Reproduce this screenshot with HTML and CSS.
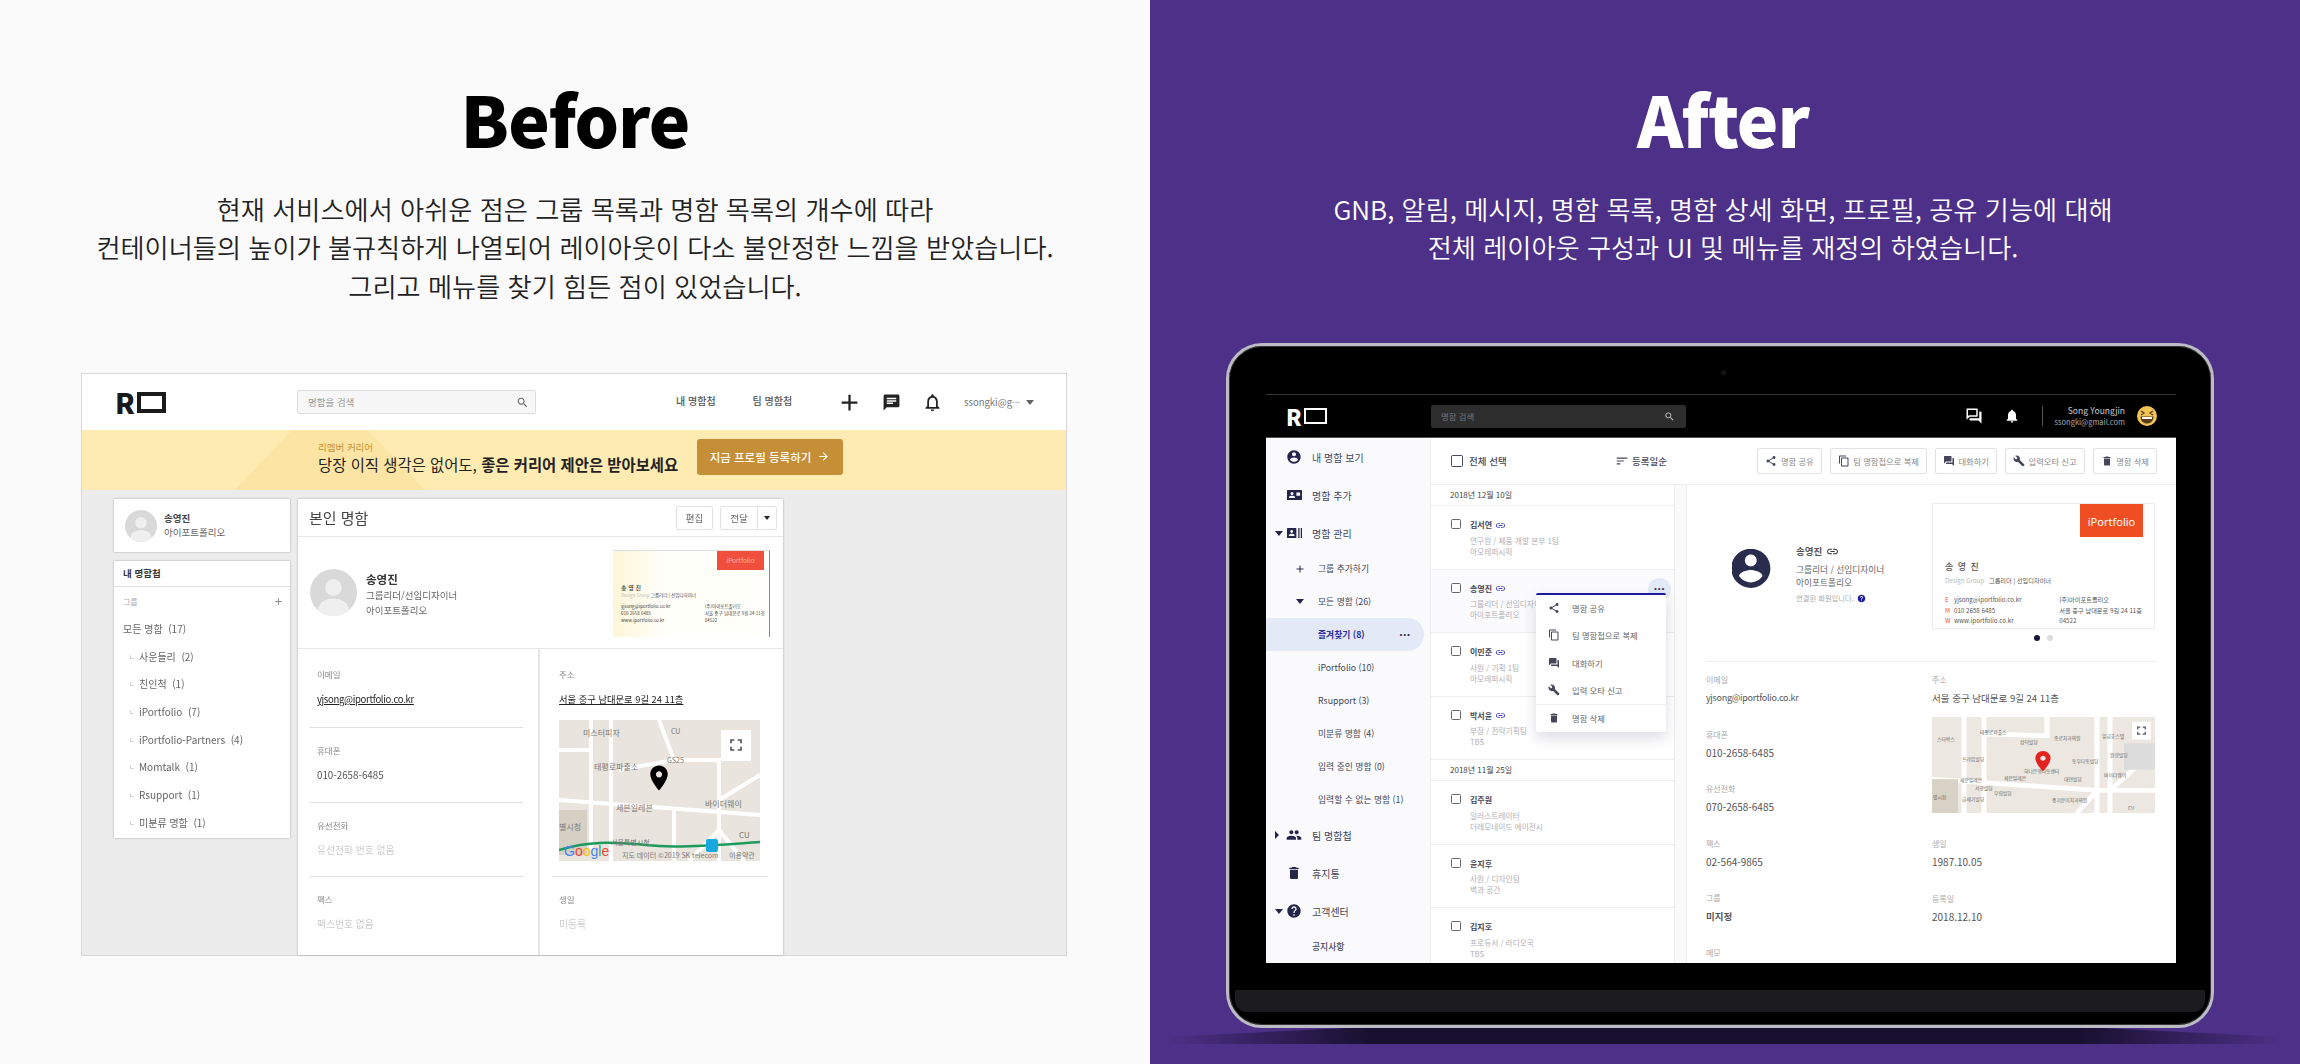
FILE: index.html
```html
<!DOCTYPE html>
<html lang="ko">
<head>
<meta charset="utf-8">
<title>Before / After</title>
<link rel="stylesheet" href="styles.css">
</head>
<body>
<svg class="sprite" aria-hidden="true">
  <symbol id="i-account" viewBox="0 0 24 24"><path d="M12 2C6.48 2 2 6.48 2 12s4.48 10 10 10 10-4.48 10-10S17.52 2 12 2zm0 3c1.66 0 3 1.34 3 3s-1.34 3-3 3-3-1.34-3-3 1.34-3 3-3zm0 14.2c-2.5 0-4.71-1.28-6-3.22.03-1.99 4-3.08 6-3.08 1.99 0 5.97 1.09 6 3.08-1.29 1.94-3.5 3.22-6 3.22z"/></symbol>
  <symbol id="i-chat" viewBox="0 0 24 24"><path d="M20 2H4c-1.1 0-2 .9-2 2v18l4-4h14c1.1 0 2-.9 2-2V4c0-1.1-.9-2-2-2zM6 9h12v2H6zm8 5H6v-2h8zm4-6H6V6h12z"/></symbol>
  <symbol id="i-forum" viewBox="0 0 24 24"><path d="M21 6h-2v9H6v2c0 .55.45 1 1 1h11l4 4V7c0-.55-.45-1-1-1zm-4 6V3c0-.55-.45-1-1-1H3c-.55 0-1 .45-1 1v14l4-4h10c.55 0 1-.45 1-1z"/></symbol>
  <symbol id="i-forum-o" viewBox="0 0 24 24"><path d="M21 6h-2v9H6v2c0 .55.45 1 1 1h11l4 4V7c0-.55-.45-1-1-1zM15 4v7H5.2L4 12.2V4h11zm1-2H3c-.55 0-1 .45-1 1v14l4-4h10c.55 0 1-.45 1-1V3c0-.55-.45-1-1-1z"/></symbol>
  <symbol id="i-bell" viewBox="0 0 24 24"><path d="M12 22c1.1 0 2-.9 2-2h-4c0 1.1.89 2 2 2zm6-6v-5c0-3.07-1.64-5.64-4.5-6.32V4c0-.83-.67-1.5-1.5-1.5s-1.5.67-1.5 1.5v.68C7.63 5.36 6 7.92 6 11v5l-2 2v1h16v-1l-2-2z"/></symbol>
  <symbol id="i-bell-o" viewBox="0 0 24 24"><path d="M12 22c1.1 0 2-.9 2-2h-4c0 1.1.9 2 2 2zm6-6v-5c0-3.07-1.63-5.64-4.5-6.32V4c0-.83-.67-1.5-1.5-1.5s-1.5.67-1.5 1.5v.68C7.64 5.36 6 7.92 6 11v5l-2 2v1h16v-1l-2-2zm-2 1H8v-6c0-2.48 1.51-4.5 4-4.5s4 2.02 4 4.5v6z"/></symbol>
  <symbol id="i-search" viewBox="0 0 24 24"><path d="M15.5 14h-.79l-.28-.27C15.41 12.59 16 11.11 16 9.5 16 5.91 13.09 3 9.5 3S3 5.91 3 9.5 5.91 16 9.5 16c1.61 0 3.09-.59 4.23-1.57l.27.28v.79l5 4.99L20.49 19l-4.99-5zm-6 0C7.01 14 5 11.99 5 9.5S7.01 5 9.5 5 14 7.01 14 9.5 11.99 14 9.5 14z"/></symbol>
  <symbol id="i-share" viewBox="0 0 24 24"><path d="M18 16.08c-.76 0-1.44.3-1.96.77L8.91 12.7c.05-.23.09-.46.09-.7s-.04-.47-.09-.7l7.05-4.11c.54.5 1.25.81 2.04.81 1.66 0 3-1.34 3-3s-1.34-3-3-3-3 1.34-3 3c0 .24.04.47.09.7L8.04 9.81C7.5 9.31 6.79 9 6 9c-1.66 0-3 1.34-3 3s1.34 3 3 3c.79 0 1.5-.31 2.04-.81l7.12 4.16c-.05.21-.08.43-.08.65 0 1.61 1.31 2.92 2.92 2.92 1.61 0 2.92-1.31 2.92-2.92s-1.31-2.92-2.92-2.92z"/></symbol>
  <symbol id="i-copy" viewBox="0 0 24 24"><path d="M16 1H4c-1.1 0-2 .9-2 2v14h2V3h12V1zm3 4H8c-1.1 0-2 .9-2 2v14c0 1.1.9 2 2 2h11c1.1 0 2-.9 2-2V7c0-1.1-.9-2-2-2zm0 16H8V7h11v14z"/></symbol>
  <symbol id="i-wrench" viewBox="0 0 24 24"><path d="M22.7 19l-9.1-9.1c.9-2.3.4-5-1.5-6.9-2-2-5-2.4-7.4-1.3L9 6 6 9 1.6 4.7C.4 7.1.9 10.1 2.9 12.1c1.9 1.9 4.6 2.4 6.9 1.5l9.1 9.1c.4.4 1 .4 1.4 0l2.3-2.3c.5-.4.5-1.1.1-1.4z"/></symbol>
  <symbol id="i-trash" viewBox="0 0 24 24"><path d="M6 19c0 1.1.9 2 2 2h8c1.1 0 2-.9 2-2V7H6v12zM19 4h-3.5l-1-1h-5l-1 1H5v2h14V4z"/></symbol>
  <symbol id="i-link" viewBox="0 0 24 24"><path d="M3.9 12c0-1.71 1.39-3.1 3.1-3.1h4V7H7c-2.76 0-5 2.24-5 5s2.24 5 5 5h4v-1.9H7c-1.71 0-3.1-1.39-3.1-3.1zM8 13h8v-2H8v2zm9-6h-4v1.9h4c1.71 0 3.1 1.39 3.1 3.1s-1.39 3.1-3.1 3.1h-4V17h4c2.76 0 5-2.24 5-5s-2.24-5-5-5z"/></symbol>
  <symbol id="i-help" viewBox="0 0 24 24"><path d="M12 2C6.48 2 2 6.48 2 12s4.48 10 10 10 10-4.48 10-10S17.52 2 12 2zm1 17h-2v-2h2v2zm2.07-7.75l-.9.92C13.45 12.9 13 13.5 13 15h-2v-.5c0-1.1.45-2.1 1.17-2.83l1.24-1.26c.37-.36.59-.86.59-1.41 0-1.1-.9-2-2-2s-2 .9-2 2H8c0-2.21 1.79-4 4-4s4 1.79 4 4c0 .88-.36 1.68-.93 2.25z"/></symbol>
  <symbol id="i-people" viewBox="0 0 24 24"><path d="M16 11c1.66 0 2.99-1.34 2.99-3S17.66 5 16 5c-1.66 0-3 1.34-3 3s1.34 3 3 3zm-8 0c1.66 0 2.99-1.34 2.99-3S9.66 5 8 5C6.34 5 5 6.34 5 8s1.34 3 3 3zm0 2c-2.33 0-7 1.17-7 3.5V19h14v-2.5c0-2.33-4.67-3.5-7-3.5zm8 0c-.29 0-.62.02-.97.05 1.16.84 1.97 1.97 1.97 3.45V19h6v-2.5c0-2.33-4.67-3.5-7-3.5z"/></symbol>
  <symbol id="i-full" viewBox="0 0 24 24"><path d="M7 14H5v5h5v-2H7v-3zm-2-4h2V7h3V5H5v5zm12 7h-3v2h5v-5h-2v3zM14 5v2h3v3h2V5h-5z"/></symbol>
  <symbol id="i-place" viewBox="0 0 24 24"><path d="M12 2C8.13 2 5 5.13 5 9c0 5.25 7 13 7 13s7-7.75 7-13c0-3.87-3.13-7-7-7zm0 9.5c-1.38 0-2.5-1.12-2.5-2.5s1.12-2.5 2.5-2.5 2.5 1.12 2.5 2.5-1.12 2.5-2.5 2.5z"/></symbol>
  <symbol id="i-sort" viewBox="0 0 24 24"><path d="M3 18h6v-2H3v2zM3 6v2h18V6H3zm0 7h12v-2H3v2z"/></symbol>
  <symbol id="i-plus" viewBox="0 0 24 24"><path d="M19 13h-6v6h-2v-6H5v-2h6V5h2v6h6v2z"/></symbol>
  <symbol id="i-arrow" viewBox="0 0 24 24"><path d="M12 4l-1.41 1.41L16.17 11H4v2h12.17l-5.58 5.59L12 20l8-8z"/></symbol>
  <symbol id="i-card" viewBox="0 0 24 16"><path d="M1 0h22a1 1 0 0 1 1 1v14a1 1 0 0 1-1 1H1a1 1 0 0 1-1-1V1a1 1 0 0 1 1-1zm7 3.2a2.4 2.4 0 1 0 0 4.8 2.4 2.4 0 0 0 0-4.8zM3 12.8h10v-1.2c0-1.7-3.3-2.4-5-2.4s-5 .7-5 2.4zM15 4v5h6V4z"/></symbol>
  <symbol id="i-contacts" viewBox="0 0 24 16"><path d="M1 0h13a1 1 0 0 1 1 1v14a1 1 0 0 1-1 1H1a1 1 0 0 1-1-1V1a1 1 0 0 1 1-1zm6.500 3.200a2.300 2.300 0 1 0 0 4.600 2.300 2.300 0 0 0 0-4.600zM3 12.800h9v-1.300c0-1.600-3-2.300-4.500-2.300S3 9.900 3 11.500zM18 0h2v16h-2zM22 0h2v16h-2z"/></symbol>
  <symbol id="i-person" viewBox="0 0 48 48"><circle cx="24" cy="24" r="24" fill="#d9d9d9"/><circle cx="24" cy="19" r="8.500" fill="#efefef"/><path d="M8 42c1-9 9-12 16-12s15 3 16 12a24 24 0 0 1-32 0z" fill="#efefef"/></symbol>
</svg>

<main class="page">
  <section class="pane pane-before">
    <header class="intro">
      <h1 class="title">Before</h1>
      <p class="desc">현재 서비스에서 아쉬운 점은 그룹 목록과 명함 목록의 개수에 따라<br>컨테이너들의 높이가 불규칙하게 나열되어 레이아웃이 다소 불안정한 느낌을 받았습니다.<br>그리고 메뉴를 찾기 힘든 점이 있었습니다.</p>
    </header>

    <div class="old">
      <div class="old-top">
        <div class="logo logo-dark"><span class="logo-r">R</span><span class="logo-box"></span></div>
        <div class="old-search"><span>명함을 검색</span><svg class="ic ic-13"><use href="#i-search"/></svg></div>
        <nav class="old-nav"><span>내 명함첩</span><span>팀 명함첩</span></nav>
        <div class="old-icons">
          <svg class="ic ic-24"><use href="#i-plus"/></svg>
          <svg class="ic ic-19"><use href="#i-chat"/></svg>
          <svg class="ic ic-21"><use href="#i-bell-o"/></svg>
        </div>
        <div class="old-user"><span>ssongki@g···</span><i class="caret caret-gray"></i></div>
      </div>
      <div class="old-banner">
        <div class="banner-shape"></div>
        <div class="banner-text">
          <span class="banner-small">리멤버 커리어</span>
          <span class="banner-main">당장 이직 생각은 없어도, <b>좋은 커리어 제안은 받아보세요</b></span>
        </div>
        <div class="banner-btn">지금 프로필 등록하기 <svg class="ic ic-13"><use href="#i-arrow"/></svg></div>
      </div>
      <div class="old-body">
        <aside class="old-side">
          <div class="side-me">
            <svg class="ic-avatar-s"><use href="#i-person"/></svg>
            <div class="side-me-text"><b>송영진</b><span>아이포트폴리오</span></div>
          </div>
          <div class="side-groups">
            <div class="sg-head">내 명함첩</div>
            <div class="sg-label"><span>그룹</span><svg class="ic ic-11"><use href="#i-plus"/></svg></div>
            <div class="sg-all">모든 명함 &nbsp;(17)</div>
            <div class="sg-row"><i>ㄴ</i>사운들리 &nbsp;(2)</div>
            <div class="sg-row"><i>ㄴ</i>친인척 &nbsp;(1)</div>
            <div class="sg-row"><i>ㄴ</i>iPortfolio &nbsp;(7)</div>
            <div class="sg-row"><i>ㄴ</i>iPortfolio-Partners &nbsp;(4)</div>
            <div class="sg-row"><i>ㄴ</i>Momtalk &nbsp;(1)</div>
            <div class="sg-row"><i>ㄴ</i>Rsupport &nbsp;(1)</div>
            <div class="sg-row"><i>ㄴ</i>미분류 명함 &nbsp;(1)</div>
          </div>
        </aside>
        <article class="old-main">
          <div class="om-head">
            <h2>본인 명함</h2>
            <div class="om-btns">
              <span class="om-btn">편집</span>
              <span class="om-btn om-split"><em>전달</em><i class="caret"></i></span>
            </div>
          </div>
          <div class="om-profile">
            <svg class="ic-avatar-m"><use href="#i-person"/></svg>
            <div class="om-who"><b>송영진</b><span>그룹리더/선임디자이너</span><span>아이포트폴리오</span></div>
            <div class="om-card">
              <div class="om-card-tag">iPortfolio</div>
              <div class="om-card-name">송 영 진</div>
              <div class="om-card-role"><span>Design Group</span> 그룹리더 | 선임디자이너</div>
              <div class="om-card-info">
                <div><span>yjsong@iportfolio.co.kr</span><span>010 2658 6485</span><span>www.iportfolio.co.kr</span></div>
                <div><span>(주)아이포트폴리오</span><span>서울 중구 남대문로 9길 24 11층</span><span>04522</span></div>
              </div>
            </div>
          </div>
          <div class="om-cols">
            <div class="om-col om-col-l">
              <div class="of of-first"><label>이메일</label><a class="mail">yjsong@iportfolio.co.kr</a></div>
              <div class="of"><label>휴대폰</label><span>010-2658-6485</span></div>
              <div class="of"><label>유선전화</label><span class="none">유선전화 번호 없음</span></div>
              <div class="of of-last"><label>팩스</label><span class="none">팩스번호 없음</span></div>
            </div>
            <div class="om-col om-col-r">
              <div class="of of-map"><label>주소</label><a>서울 중구 남대문로 9길 24 11층</a>
                <svg class="old-map" viewBox="0 0 201 141">
                  <rect width="201" height="141" fill="#e9e5de"/>
                  <g stroke="#fff" stroke-width="4" fill="none">
                    <path d="M32 0V130M52 0V141M0 80L201 95M100 0L115 40H160V141M0 30H32M115 40L60 50M160 80L201 55M160 110L130 141M160 110L185 141M115 90V141"/>
                  </g>
                  <rect x="0" y="90" width="28" height="45" fill="#d6d0c4"/>
                  <path d="M0 130C40 118 70 124 100 126S170 124 201 122" stroke="#1c9c5c" stroke-width="2.500" fill="none"/>
                  <g class="map-t">
                    <text x="24" y="16" fill="#a5725a">미스터피자</text>
                    <text x="35" y="50">태평로파출소</text>
                    <text x="108" y="43" class="map-s">GS25</text>
                    <text x="112" y="14" class="map-s">CU</text>
                    <text x="57" y="91">세븐일레븐</text>
                    <text x="146" y="87">바이더웨이</text>
                    <text x="0" y="110">별시청</text>
                    <text x="180" y="118">CU</text>
                    <text x="52" y="125" class="map-s">서울특별시청</text>
                    <text x="63" y="138" class="map-s">지도 데이터 ©2019 SK telecom</text>
                    <text x="170" y="138" class="map-s">이용약관</text>
                  </g>
                  <text x="5" y="136" class="g-logo"><tspan fill="#4285f4">G</tspan><tspan fill="#ea4335">o</tspan><tspan fill="#fbbc05">o</tspan><tspan fill="#4285f4">g</tspan><tspan fill="#34a853">l</tspan><tspan fill="#ea4335">e</tspan></text>
                  <rect x="147" y="119" width="12" height="13" rx="2" fill="#18a8e0"/>
                  <rect x="162" y="10" width="30" height="31" fill="#fff"/>
                  <use href="#i-full" x="167" y="15" width="20" height="20" fill="#555"/>
                  <use href="#i-place" x="85" y="43" width="30" height="30" fill="#000"/>
                </svg>
              </div>
              <div class="of of-last"><label>생일</label><span class="none">미등록</span></div>
            </div>
          </div>
        </article>
      </div>
    </div>
  </section>

  <section class="pane pane-after">
    <header class="intro intro-after">
      <h1 class="title">After</h1>
      <p class="desc">GNB, 알림, 메시지, 명함 목록, 명함 상세 화면, 프로필, 공유 기능에 대해<br>전체 레이아웃 구성과 UI 및 메뉴를 재정의 하였습니다.</p>
    </header>

    <div class="laptop">
      <span class="camera"></span>
      <div class="screen">
        <div class="app-top">
          <div class="logo logo-light"><span class="logo-r">R</span><span class="logo-box"></span></div>
          <div class="app-search"><span>명함 검색</span><svg class="ic ic-11"><use href="#i-search"/></svg></div>
          <div class="app-right">
            <svg class="ic ic-18"><use href="#i-forum-o"/></svg>
            <svg class="ic ic-16"><use href="#i-bell"/></svg>
            <i class="app-sep"></i>
            <div class="app-user"><span>Song Youngjin</span><span>ssongki@gmail.com</span></div>
            <svg class="emoji" viewBox="0 0 20 20"><circle cx="10" cy="10" r="10" fill="#f1c453"/><path d="M3.500 10.500h13C16.500 15 13.500 17.500 10 17.500S3.500 15 3.500 10.500z" fill="#5a3d1e"/><path d="M5 11h10v2H5z" fill="#fff"/><path d="M4 5l3 2-3 2M16 5l-3 2 3 2" stroke="#5a3d1e" stroke-width="1.300" fill="none"/></svg>
          </div>
        </div>
        <div class="app-body">
          <nav class="app-side">
            <div class="nav-main"><i class="nav-arrow"></i><svg class="ic nav-ic"><use href="#i-account"/></svg><span>내 명함 보기</span></div>
            <div class="nav-main"><i class="nav-arrow"></i><svg class="nav-ic nav-ic-wide"><use href="#i-card"/></svg><span>명함 추가</span></div>
            <div class="nav-main"><i class="nav-arrow"><b class="caret caret-navy"></b></i><svg class="nav-ic nav-ic-wide"><use href="#i-contacts"/></svg><span>명함 관리</span></div>
            <div class="nav-sub"><svg class="ic nav-sub-ic"><use href="#i-plus"/></svg><span>그룹 추가하기</span></div>
            <div class="nav-sub"><i class="nav-sub-ic nav-sub-c"><b class="caret caret-navy"></b></i><span>모든 명함 (26)</span></div>
            <div class="nav-sub nav-active"><i class="nav-sub-ic"></i><span>즐겨찾기 (8)</span><em class="dots">•••</em></div>
            <div class="nav-sub"><i class="nav-sub-ic"></i><span>iPortfolio (10)</span></div>
            <div class="nav-sub"><i class="nav-sub-ic"></i><span>Rsupport (3)</span></div>
            <div class="nav-sub"><i class="nav-sub-ic"></i><span>미분류 명함 (4)</span></div>
            <div class="nav-sub"><i class="nav-sub-ic"></i><span>입력 중인 명함 (0)</span></div>
            <div class="nav-sub"><i class="nav-sub-ic"></i><span>입력할 수 없는 명함 (1)</span></div>
            <div class="nav-main"><i class="nav-arrow"><b class="caret-r"></b></i><svg class="ic nav-ic"><use href="#i-people"/></svg><span>팀 명함첩</span></div>
            <div class="nav-main"><i class="nav-arrow"></i><svg class="ic nav-ic"><use href="#i-trash"/></svg><span>휴지통</span></div>
            <div class="nav-main"><i class="nav-arrow"><b class="caret caret-navy"></b></i><svg class="ic nav-ic"><use href="#i-help"/></svg><span>고객센터</span></div>
            <div class="nav-sub nav-notice"><span>공지사항</span></div>
          </nav>
          <div class="app-list">
            <div class="list-head">
              <i class="check check-lg"></i><b>전체 선택</b>
              <div class="list-sort"><svg class="ic ic-14"><use href="#i-sort"/></svg><b>등록일순</b></div>
            </div>
            <div class="list-scroll">
              <div class="list-col">
                <div class="list-date">2018년 12월 10일</div>
                <div class="item"><i class="check"></i><div><div class="item-name">김서연 <svg class="ic ic-link"><use href="#i-link"/></svg></div><p>연구원 / 제품 개발 본부 1팀</p><p>아모레퍼시픽</p></div></div>
                <div class="item item-on"><i class="check"></i><div><div class="item-name">송영진 <svg class="ic ic-link"><use href="#i-link"/></svg></div><p>그룹리더 / 선임디자이너</p><p>아이포트폴리오</p></div>
                  <span class="item-more">•••</span>
                  <div class="menu">
                    <div class="menu-row"><svg class="ic ic-12"><use href="#i-share"/></svg>명함 공유</div>
                    <div class="menu-row"><svg class="ic ic-12"><use href="#i-copy"/></svg>팀 명함첩으로 복제</div>
                    <div class="menu-row"><svg class="ic ic-12"><use href="#i-forum"/></svg>대화하기</div>
                    <div class="menu-row"><svg class="ic ic-12"><use href="#i-wrench"/></svg>입력 오타 신고</div>
                    <div class="menu-row menu-last"><svg class="ic ic-12"><use href="#i-trash"/></svg>명함 삭제</div>
                  </div>
                </div>
                <div class="item"><i class="check"></i><div><div class="item-name">이민준 <svg class="ic ic-link"><use href="#i-link"/></svg></div><p>사원 / 기획 1팀</p><p>아모레퍼시픽</p></div></div>
                <div class="item"><i class="check"></i><div><div class="item-name">박서윤 <svg class="ic ic-link"><use href="#i-link"/></svg></div><p>부장 / 전략기획팀</p><p>TBS</p></div></div>
                <div class="list-date">2018년 11월 25일</div>
                <div class="item"><i class="check"></i><div><div class="item-name">김주원</div><p>일러스트레이터</p><p>더레모네이드 에이전시</p></div></div>
                <div class="item"><i class="check"></i><div><div class="item-name">윤지후</div><p>사원 / 디자인팀</p><p>벽과 공간</p></div></div>
                <div class="item"><i class="check"></i><div><div class="item-name">김지호</div><p>프로듀서 / 라디오국</p><p>TBS</p></div></div>
              </div>
            </div>
          </div>
          <div class="app-detail">
            <div class="det-head">
              <span class="det-btn"><svg class="ic ic-12"><use href="#i-share"/></svg>명함 공유</span>
              <span class="det-btn"><svg class="ic ic-12"><use href="#i-copy"/></svg>팀 명함첩으로 복제</span>
              <span class="det-btn"><svg class="ic ic-12"><use href="#i-forum"/></svg>대화하기</span>
              <span class="det-btn"><svg class="ic ic-12"><use href="#i-wrench"/></svg>입력오타 신고</span>
              <span class="det-btn"><svg class="ic ic-12"><use href="#i-trash"/></svg>명함 삭제</span>
            </div>
            <div class="det-top">
              <div class="det-who">
                <svg class="ic det-avatar" viewBox="2 2 20 20"><use href="#i-account"/></svg>
                <div class="det-text">
                  <b>송영진 <svg class="ic ic-link-d"><use href="#i-link"/></svg></b>
                  <span>그룹리더 / 선임디자이너</span>
                  <span>아이포트폴리오</span>
                  <small>연결된 회원입니다. <svg class="ic ic-help"><use href="#i-help"/></svg></small>
                </div>
              </div>
              <div class="det-cardwrap">
                <div class="bcard">
                  <div class="bcard-tag">iPortfolio</div>
                  <div class="bcard-name">송 영 진</div>
                  <div class="bcard-role"><span>Design Group</span> 그룹리더 | 선임디자이너</div>
                  <div class="bcard-info">
                    <div><span><i>E</i>yjsong@iportfolio.co.kr</span><span><i>M</i>010 2658 6485</span><span><i>W</i>www.iportfolio.co.kr</span></div>
                    <div><span>(주)아이포트폴리오</span><span>서울 중구 남대문로 9길 24 11층</span><span>04522</span></div>
                  </div>
                </div>
                <div class="bcard-dots"><i class="on"></i><i></i></div>
              </div>
            </div>
            <div class="det-info">
              <div class="det-col">
                <div class="df"><label>이메일</label><span class="mail">yjsong@iportfolio.co.kr</span></div>
                <div class="df"><label>휴대폰</label><span>010-2658-6485</span></div>
                <div class="df"><label>유선전화</label><span>070-2658-6485</span></div>
                <div class="df"><label>팩스</label><span>02-564-9865</span></div>
                <div class="df"><label>그룹</label><span><b>미지정</b></span></div>
                <div class="df"><label>메모</label></div>
              </div>
              <div class="det-col">
                <div class="df df-map"><label>주소</label><span class="addr">서울 중구 남대문로 9길 24 11층</span>
                  <svg class="new-map" viewBox="0 0 223 102" preserveAspectRatio="none">
                    <rect width="223" height="102" fill="#ece7e0"/>
                    <g stroke="#fff" stroke-width="5" fill="none">
                      <path d="M32 0V102M52 0V102M0 66L165 78H223M165 0V102M115 0L115 20 52 18M165 78L145 102M178 78L223 35M178 0V102"/>
                    </g>
                    <rect x="0" y="66" width="26" height="36" fill="#d8d2c6"/>
                    <rect x="192" y="28" width="31" height="28" fill="#dcdcdc"/>
                    <g class="map-n">
                      <text x="5" y="26" fill="#b5651d">스타벅스</text>
                      <text x="30" y="47">프라임빌딩</text>
                      <text x="48" y="18">태평로파출소</text>
                      <text x="88" y="29">삼덕빌딩</text>
                      <text x="122" y="24" fill="#a33">종로치과의원</text>
                      <text x="140" y="49">동부다동빌딩</text>
                      <text x="92" y="59">하나은행다동센터</text>
                      <text x="28" y="69">세븐일레븐</text>
                      <text x="72" y="67">세븐일레븐</text>
                      <text x="132" y="68">대연빌딩</text>
                      <text x="43" y="78">서광빌딩</text>
                      <text x="62" y="83">부림빌딩</text>
                      <text x="30" y="89">금세기빌딩</text>
                      <text x="120" y="90" fill="#a33">중기분이치과의원</text>
                      <text x="170" y="22">일급호스텔</text>
                      <text x="178" y="42">원양빌딩</text>
                      <text x="172" y="64">바이더웨이</text>
                      <text x="1" y="87">별시청</text>
                      <text x="196" y="99">CU</text>
                    </g>
                    <use href="#i-place" x="98" y="34" width="26" height="26" fill="#e3211f"/>
                    <rect x="200" y="5" width="19" height="19" fill="#fff"/>
                    <use href="#i-full" x="202" y="7" width="15" height="15" fill="#555"/>
                  </svg>
                </div>
                <div class="df"><label>생일</label><span>1987.10.05</span></div>
                <div class="df"><label>등록일</label><span>2018.12.10</span></div>
              </div>
            </div>
          </div>
        </div>
      </div>
      <div class="lip"></div>
    </div>
    <div class="laptop-shadow"></div>
  </section>
</main>
</body>
</html>
```

FILE: styles.css
```css
* { box-sizing: border-box; }
html, body { margin: 0; padding: 0; }
body { width: 2300px; height: 1064px; overflow: hidden; font-family: "Noto Sans CJK KR", "Noto Sans", sans-serif; color: #333; }
p, h1, h2 { margin: 0; }
i, em { font-style: normal; }
label { display: block; }
.sprite { display: none; }
.ic { fill: currentColor; flex: none; display: block; }
.ic-11 { width: 11px; height: 11px; }
.ic-12 { width: 12px; height: 12px; }
.ic-13 { width: 13px; height: 13px; }
.ic-14 { width: 14px; height: 14px; }
.ic-16 { width: 16px; height: 16px; }
.ic-18 { width: 18px; height: 18px; }
.ic-19 { width: 19px; height: 19px; }
.ic-21 { width: 21px; height: 21px; }
.ic-24 { width: 24px; height: 24px; }

.page { display: flex; width: 2300px; height: 1064px; }
.pane { width: 1150px; height: 1064px; flex: none; position: relative; overflow: hidden; }
.pane-before { background: #fafafa; padding-left: 81px; padding-right: 83px; color: #222; }
.pane-after { background: #4d3087; padding-left: 76px; color: #fff; }

.intro { padding-top: 67px; margin-left: -81px; width: 1150px; text-align: center; }
.intro-after { margin-left: -76px; padding-right: 4px; }
.title { height: 102px; line-height: 102px; font-size: 70px; font-weight: 900; color: #000; letter-spacing: -1px; }
.pane-after .title { color: #fff; }
.desc { margin-top: 21px; font-size: 26.2px; line-height: 38.3px; font-weight: 350; height: 115px; }

/* Logo */
.logo { display: flex; align-items: center; gap: 2px; }
.logo-r { font-weight: 900; line-height: 1; }
.logo-box { display: block; border-style: solid; }
.logo-dark { color: #1a1a1a; width: 51px; }
.logo-dark .logo-r { font-size: 28px; }
.logo-dark .logo-box { width: 31px; height: 21px; border-width: 4px; border-color: #1a1a1a; }
.logo-light { color: #fff; width: 41px; }
.logo-light .logo-r { font-size: 22px; }
.logo-light .logo-box { width: 25px; height: 16px; border-width: 2.500px; border-color: #fff; }

.caret { display: block; width: 0; height: 0; border: 4px solid transparent; border-top: 5px solid #222; border-bottom: 0; }
.caret-gray { border-top-color: #666; }
.caret-navy { border-top-color: #23264a; }
.caret-r { display: block; width: 0; height: 0; border: 4px solid transparent; border-left: 4px solid #23264a; border-right: 0; }

/* ========== Before mock ========== */
.old { width: 986px; height: 583px; margin-top: 68px; display: flex; flex-direction: column; background: #ececec; border: 1px solid #d8d8d8; filter: blur(.4px); }
.old-top { height: 56px; flex: none; background: #fff; display: flex; align-items: center; padding-left: 33px; }
.old-search { width: 239px; height: 24px; margin-left: 131px; border: 1px solid #ddd; border-radius: 2px; background: #f7f7f7; display: flex; align-items: center; justify-content: space-between; padding: 0 6px 0 10px; font-size: 9.500px; color: #999; }
.old-search .ic { color: #666; }
.old-nav { width: 140px; margin-left: 140px; display: flex; gap: 37px; font-size: 10px; font-weight: 500; color: #555; margin-top: -3px; }
.old-icons { display: flex; align-items: center; gap: 21px; color: #222; margin-left: 20px; }
.old-icons .ic-24 { width: 27px; height: 27px; margin-right: -2px; }
.old-user { display: flex; align-items: center; gap: 6px; font-size: 9.500px; color: #777; margin-left: 21px; }
.old-banner { height: 60px; flex: none; background: #fdebb2; position: relative; display: flex; align-items: center; padding-left: 236px; }
.banner-shape { position: absolute; left: 153px; top: 0; width: 190px; height: 60px; background: #fce5a4; clip-path: polygon(30% 0, 70% 0, 100% 100%, 0 100%); }
.banner-text { position: relative; display: flex; flex-direction: column; width: 379px; margin-top: -5px; }
.banner-small { font-size: 9.500px; line-height: 14px; color: #c8922f; }
.banner-main { font-size: 15.400px; line-height: 21px; color: #222; white-space: nowrap; }
.banner-main b { font-weight: 700; }
.banner-btn { position: relative; width: 146px; height: 36px; margin-top: -7px; background: #c48f37; border-radius: 3px; color: #fff; font-size: 11.500px; font-weight: 500; display: flex; align-items: center; justify-content: center; gap: 6px; }
.old-body { flex: 1; display: flex; padding: 9px 0 0 32px; gap: 8px; min-height: 0; }
.old-side { width: 176px; flex: none; display: flex; flex-direction: column; gap: 9px; }
.side-me { height: 53px; background: #fff; box-shadow: 0 0 2px rgba(0,0,0,.3); display: flex; align-items: center; padding-left: 11px; gap: 7px; }
.ic-avatar-s { width: 32px; height: 32px; flex: none; }
.side-me-text { display: flex; flex-direction: column; font-size: 9.500px; line-height: 14px; color: #666; margin-top: -2px; }
.side-me-text b { font-size: 9.500px; color: #444; font-weight: 700; }
.side-groups { height: 277px; background: #fff; box-shadow: 0 0 2px rgba(0,0,0,.3); font-size: 10px; color: #666; }
.sg-head { height: 26px; line-height: 24px; padding-left: 9px; border-bottom: 1px solid #ddd; font-weight: 700; font-size: 9.500px; color: #333; }
.sg-label { height: 28px; padding: 0 6px 0 9px; display: flex; justify-content: space-between; align-items: center; font-size: 8px; color: #aaa; }
.sg-label .ic { color: #888; }
.sg-all { height: 27.600px; line-height: 28px; padding-left: 9px; }
.sg-row { height: 27.700px; line-height: 27.700px; padding-left: 15px; display: flex; white-space: pre; }
.sg-row i { width: 10px; font-size: 6px; color: #aaa; }
.old-main { width: 485px; flex: none; background: #fff; box-shadow: 0 0 2px rgba(0,0,0,.3); display: flex; flex-direction: column; }
.om-head { height: 38px; flex: none; border-bottom: 1px solid #e6e6e6; display: flex; align-items: center; justify-content: space-between; padding: 0 6px 0 11px; }
.om-head h2 { font-size: 15px; font-weight: 400; color: #444; }
.om-btns { display: flex; gap: 7px; }
.om-btn { height: 24px; min-width: 37px; border: 1px solid #e2e2e2; border-radius: 2px; font-size: 9.500px; color: #666; display: flex; align-items: center; justify-content: center; }
.om-split { width: 57px; }
.om-split em { flex: 1; text-align: center; line-height: 22px; border-right: 1px solid #e2e2e2; }
.om-split .caret { margin: 0 6px; border-width: 3.500px; border-top-width: 4px; border-bottom: 0; }
.om-profile { height: 112px; flex: none; border-bottom: 1px solid #e6e6e6; display: flex; padding: 13px 12px 0 12px; }
.ic-avatar-m { width: 47px; height: 47px; margin-top: 19px; flex: none; }
.om-who { margin: 20px 0 0 9px; display: flex; flex-direction: column; font-size: 9.500px; line-height: 14.500px; color: #666; width: 247px; }
.om-who b { font-size: 11.500px; line-height: 18px; color: #333; }
.om-card { width: 157px; height: 87px; background: linear-gradient(90deg, #fdf6d8, #fffef8 30%, #fffefa); border-right: 1px solid #888; border-top: 1px solid #ddd; position: relative; padding: 32px 4px 0 8px; font-size: 4.500px; line-height: 7px; color: #444; }
.om-card-tag { position: absolute; right: 5px; top: 0; width: 47px; height: 19px; background: #f04f3e; color: #ffb5a8; font-size: 6.500px; line-height: 19px; text-align: center; }
.om-card-name { font-size: 6px; line-height: 9px; color: #333; font-weight: 500; }
.om-card-role span { color: #bbb; }
.om-card-info { display: flex; justify-content: space-between; margin-top: 4px; }
.om-card-info > div { display: flex; flex-direction: column; }
.om-cols { flex: 1; display: flex; min-height: 0; }
.om-col { flex: none; }
.om-col-l { width: 242px; padding: 0 15px 0 12px; border-right: 2px solid #e6e6e6; }
.om-col-r { width: 243px; padding: 0 15px 0 12px; }
.of { height: 74.500px; padding: 12px 0 0 7px; border-bottom: 1px solid #e0e0e0; font-size: 9.800px; color: #555; }
.of-first { height: 79px; padding-top: 15px; }
.of label { font-size: 8.500px; line-height: 20px; color: #888; margin-bottom: 6px; }
.of a { color: #222; text-decoration: underline; font-size: 9.300px; line-height: 18px; display: block; }
.of a.mail { font-size: 9.500px; letter-spacing: -.3px; }
.of span { line-height: 18px; display: block; }
.of .none { color: #ccc; }
.of-last { border-bottom: 0; }
.of-map { height: 228px; padding-top: 15px; }
.old-map { display: block; width: 201px; height: 141px; margin-top: 12px; }
.map-t text { font-size: 8px; fill: #777; font-family: "Noto Sans CJK KR", sans-serif; }
.map-t .map-s { font-size: 7px; }
.g-logo { font-size: 14px; font-family: "Liberation Sans", sans-serif; }

/* ========== After laptop ========== */
.laptop { width: 988px; height: 685px; margin-top: 38px; padding: 48px 6px 0; background: #000; border: 3px solid #bcbcc4; border-radius: 36px; position: relative; z-index: 1; box-shadow: inset 0 0 0 1px #333; }
.camera { position: absolute; left: 492px; top: 24px; width: 5px; height: 5px; border-radius: 50%; background: #141416; }
.screen { width: 910px; height: 569px; margin: 0 31px; overflow: hidden; background: #fff; display: flex; flex-direction: column; color: #555; }
.lip { height: 22px; margin-top: 27px; background: #1c1b1e; border-radius: 0 0 12px 12px; }
.laptop-shadow { position: absolute; left: 20px; width: 1110px; top: 1028px; height: 16px; background: linear-gradient(90deg, transparent, #181030 18%, #181030 82%, transparent); clip-path: polygon(0 55%, 16% 0, 84% 0, 100% 55%, 100% 100%, 0 100%); }

.app-top { height: 44px; flex: none; background: #000; border-top: 1px solid #333; border-bottom: 1px solid #555; display: flex; align-items: center; padding-left: 20px; }
.app-search { width: 255px; height: 23px; margin-left: 104px; background: #2d2d2d; border-radius: 2px; display: flex; justify-content: space-between; align-items: center; padding: 0 11px 0 10px; font-size: 8.400px; color: #777; }
.app-search .ic { color: #ccc; }
.app-right { margin-left: auto; padding-right: 19px; display: flex; align-items: center; color: #fff; }
.app-right .ic-16 { margin-left: 21px; }
.app-sep { width: 1px; height: 20px; background: #555; margin: 0 12px 0 22px; }
.app-user { display: flex; flex-direction: column; align-items: flex-end; }
.app-user span:first-child { font-size: 8.500px; line-height: 11px; color: #ccc; }
.app-user span:last-child { font-size: 7.500px; line-height: 11px; color: #aaa; }
.emoji { width: 20px; height: 20px; margin-left: 12px; }

.app-body { flex: 1; display: flex; min-height: 0; }
.app-side { width: 165px; flex: none; background: #fafafc; border-right: 1px solid #eee; color: #44465a; overflow: hidden; }
.nav-main { height: 38px; display: flex; align-items: center; font-size: 10px; }
.nav-arrow { width: 20px; padding-left: 9px; display: flex; }
.nav-ic { width: 16px; height: 16px; color: #23264a; fill: #23264a; flex: none; }
.nav-ic-wide { width: 15px; height: 10px; margin: 0 .5px; }
.nav-main > span { margin-left: 10px; }
.nav-sub { height: 33px; display: flex; align-items: center; font-size: 8.800px; position: relative; }
.nav-sub-ic { width: 12px; height: 12px; margin-left: 28px; margin-right: 12px; color: #23264a; flex: none; display: block; }
.nav-sub-c { display: flex; align-items: center; justify-content: center; }
.nav-active { width: 158px; background: #e3e9f7; border-radius: 0 17px 17px 0; color: #2b2fa0; font-weight: 700; }
.dots { position: absolute; right: 13px; font-size: 7px; font-family: "Liberation Sans", sans-serif; color: #23264a; letter-spacing: 1.300px; }
.nav-notice { padding-left: 46px; font-weight: 500; }

.app-list { width: 256px; flex: none; display: flex; flex-direction: column; min-height: 0; }
.list-head { height: 47px; flex: none; border-bottom: 1px solid #eee; display: flex; align-items: center; padding: 0 20px; font-size: 9.500px; color: #44465a; }
.list-head > b { margin-left: 6px; font-weight: 500; }
.list-sort { margin-left: auto; display: flex; align-items: center; gap: 3px; }
.list-sort b { font-weight: 500; }
.list-scroll { flex: 1; background: #fafafa; min-height: 0; padding-right: 11px; border-right: 1px solid #eee; }
.list-col { background: #fff; border-right: 1px solid #eee; height: 100%; }
.check { width: 10px; height: 10px; border: 1.200px solid #666; border-radius: 1.500px; flex: none; display: block; }
.check-lg { width: 12px; height: 12px; border-color: #44465a; border-width: 1.400px; }
.list-date { height: 21px; line-height: 20px; padding-left: 19px; font-size: 8px; color: #444; border-bottom: 1px solid #eee; }
.item { height: 63.500px; border-bottom: 1px solid #eee; display: flex; padding: 13px 0 0 20px; gap: 9px; position: relative; font-size: 7.700px; color: #b0b0b5; }
.item p { line-height: 11.300px; }
.item-name { font-size: 8px; font-weight: 700; line-height: 12px; color: #44465a; display: flex; align-items: center; gap: 3px; margin-bottom: 3.500px; }
.ic-link { width: 11px; height: 11px; color: #3a3fc0; }
.item-on { background: #fbfbfd; }
.item-more { position: absolute; left: 217px; top: 8px; width: 23px; height: 23px; line-height: 22px; padding-left: 1px; border-radius: 50%; background: #e3e9f7; text-align: center; font-size: 7px; font-family: "Liberation Sans", sans-serif; color: #23264a; letter-spacing: 1.300px; }
.menu { position: absolute; z-index: 3; left: 105px; top: 23px; width: 130px; height: 139px; background: #fff; border-top: 2.500px solid #1a1a9c; border-radius: 2px; box-shadow: 0 6px 14px rgba(40,40,80,.16); color: #666; font-size: 8.300px; }
.menu-row { height: 27.300px; display: flex; align-items: center; padding-left: 12px; gap: 12px; }
.menu-row .ic { color: #44465a; }
.menu-last { border-top: 1px solid #f1f1f1; }

.app-detail { flex: 1; min-width: 0; display: flex; flex-direction: column; }
.det-head { height: 47px; flex: none; border-bottom: 1px solid #eee; display: flex; align-items: center; justify-content: flex-end; gap: 8px; padding-right: 19px; }
.det-btn { height: 26px; border: 1px solid #e2e2e6; border-radius: 2px; display: flex; align-items: center; gap: 3.500px; padding: 0 7px; font-size: 8.300px; color: #888; white-space: nowrap; }
.det-btn .ic { color: #44465a; }
.det-top { height: 177px; flex: none; margin: 0 19px; border-bottom: 1px solid #eee; display: flex; padding-top: 18px; }
.det-who { width: 226px; flex: none; display: flex; padding: 46px 0 0 26px; }
.det-avatar { width: 47px; height: 48px; color: #2a2c4e; }
.det-text { margin-left: 17px; display: flex; flex-direction: column; font-size: 8.700px; line-height: 13px; color: #666; }
.det-text b { font-size: 9.500px; line-height: 15px; margin-top: -5px; margin-bottom: 4px; color: #555; display: flex; align-items: center; gap: 4px; white-space: nowrap; }
.ic-link-d { width: 13px; height: 13px; color: #333; }
.det-text span { white-space: nowrap; }
.det-text small { font-size: 7.300px; color: #aaa; line-height: 12px; margin-top: 3px; display: flex; align-items: center; gap: 3px; white-space: nowrap; }
.ic-help { width: 9px; height: 9px; color: #1a1a9c; }
.det-cardwrap { width: 223px; flex: none; }
.bcard { height: 126px; border: 1px solid #ececec; position: relative; padding: 55px 12px 0 12px; font-size: 6.200px; line-height: 10.500px; color: #555; }
.bcard-tag { position: absolute; right: 11px; top: 0; width: 63px; height: 33px; background: #ef4d22; color: #fff; font-size: 11px; line-height: 36px; text-align: center; font-family: "Noto Sans", sans-serif; }
.bcard-name { font-size: 9px; line-height: 15px; color: #555; font-weight: 500; letter-spacing: 1px; }
.bcard-role { line-height: 11px; margin-top: 1px; }
.bcard-role span { color: #bbb; margin-right: 3px; }
.bcard-info { display: flex; justify-content: space-between; margin-top: 9px; }
.bcard-info > div { display: flex; flex-direction: column; }
.bcard-info i { display: inline-block; width: 9px; color: #ef4d22; }
.bcard-dots { display: flex; justify-content: center; gap: 7px; margin-top: 6px; }
.bcard-dots i { width: 6px; height: 6px; border-radius: 50%; background: #ddd; }
.bcard-dots .on { background: #16163a; }
.det-info { flex: 1; margin: 9px 19px 0; display: flex; min-height: 0; }
.det-col { width: 226px; flex: none; }
.df { height: 54.500px; }
.df label { font-size: 8px; line-height: 18px; color: #aaa; }
.df span { display: block; font-size: 10px; line-height: 18px; color: #555; }
.df span.mail { font-size: 9px; letter-spacing: -.25px; }
.df span.addr { font-size: 9.500px; }
.df b { font-weight: 700; font-size: 9.500px; }
.df-map { height: 164px; }
.new-map { display: block; width: 223px; height: 96px; margin-top: 10px; }
.map-n text { font-size: 4.800px; fill: #666; font-family: "Noto Sans CJK KR", sans-serif; }
```
